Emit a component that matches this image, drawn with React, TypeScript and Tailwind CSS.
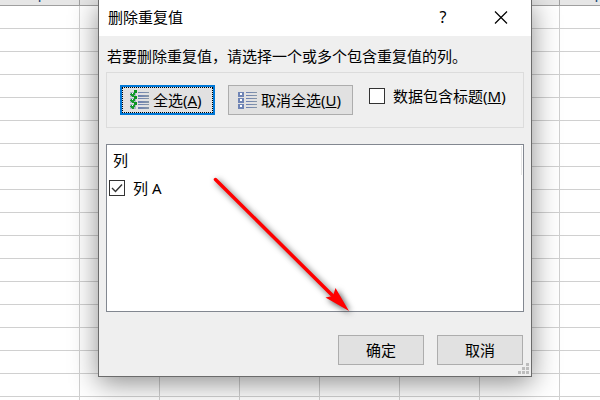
import type { ReactNode } from "react"

const columns = ["I", "J", "K", "L", "M", "N", "O", "P", "Q", "R", "S", "T", "U", "V", "W", "X"]
const rows = Array.from({ length: 40 }, (_, i) => i)

function Sheet() {
  return (
    <table className="table-fixed border-separate border-spacing-0 w-[1280px]">
      <thead>
        <tr>
          {columns.map((name) => (
            <th key={name} className="p-0 bg-[#e6e6e6] border-r border-b border-[#9f9f9f] text-[#1f4e79] font-normal">
              <div className="h-[5px] flex items-end justify-center overflow-hidden text-[15px] leading-[17px] font-['Liberation_Sans',sans-serif]">
                {name}
              </div>
            </th>
          ))}
        </tr>
      </thead>
      <tbody>
        {rows.map((row) => (
          <tr key={row}>
            {columns.map((name) => (
              <td key={name} className="h-[23px] p-0 border-r border-b border-[#d0d0d0]" />
            ))}
          </tr>
        ))}
      </tbody>
    </table>
  )
}

function ListIcon({ checked = false }: { checked?: boolean }) {
  return (
    <svg width="20" height="20" viewBox="0 0 20 20" shapeRendering="crispEdges" aria-hidden="true">
      <defs>
        <linearGradient id="fade">
          <stop offset="0" stopColor="#6a7fb3" />
          <stop offset="1" stopColor="#8797a8" />
        </linearGradient>
      </defs>
      {[2, 8, 14].map((y) => (
        <g key={y}>
          <rect x="0" y={y} width="6" height="5" fill={checked ? "#a9b6c9" : "#6f84b5"} />
          <rect x="2" y={y + 1} width="2" height="2" fill="#fff" />
          <rect x="8" y={y} width="11" height="1" fill="url(#fade)" />
          <rect x="8" y={y + 3} width="11" height={checked ? 2 : 1} fill="url(#fade)" />
          {checked && (
            <>
              <path d={`M1 ${y + 2} L3 ${y + 4} L5 ${y}`} fill="none" stroke="#169a2c" strokeWidth="1.5" />
              <rect x="4" y={y - 2} width="3" height="3" fill="#0c9420" />
            </>
          )}
        </g>
      ))}
    </svg>
  )
}

function CheckBox({ id, defaultChecked = false, children }: { id: string; defaultChecked?: boolean; children: ReactNode }) {
  return (
    <div className="flex items-center gap-2">
      <span className="grid size-4">
        <input
          id={id}
          type="checkbox"
          defaultChecked={defaultChecked}
          className="peer [grid-area:1/1] size-4 appearance-none border border-[#333] bg-white"
        />
        <svg viewBox="0 0 16 16" className="[grid-area:1/1] size-4 pointer-events-none invisible peer-checked:visible">
          <path d="M3 8 L6.5 11.5 L13 4.5" fill="none" stroke="#333" strokeWidth="1.4" />
        </svg>
      </span>
      <label htmlFor={id}>{children}</label>
    </div>
  )
}

function Grip() {
  const dots = [[8, 0], [4, 4], [8, 4], [0, 8], [4, 8], [8, 8]]
  return (
    <svg width="11" height="11" viewBox="0 0 11 11" className="absolute right-[2px] bottom-[2px]" aria-hidden="true">
      {dots.map(([x, y]) => (
        <rect key={`${x}-${y}`} x={x} y={y} width="3" height="3" fill="#bdbdbd" />
      ))}
    </svg>
  )
}

function Arrow() {
  return (
    <svg
      width="150"
      height="150"
      viewBox="0 0 150 150"
      className="absolute left-[210px] top-[174px] overflow-visible pointer-events-none drop-shadow-[2px_2px_3px_rgba(0,0,0,0.7)]"
      aria-hidden="true"
    >
      <path d="M5.5 5.5 L126 125" stroke="#f00" strokeWidth="3.5" strokeLinecap="round" />
      <path d="M139 137 L115.5 123.5 L123 122 L125.5 114 Z" fill="#f00" />
    </svg>
  )
}

export default function App() {
  return (
    <main className="relative h-screen overflow-hidden bg-white text-black text-[15px] leading-5 font-['Noto_Sans','Noto_Sans_CJK_SC',sans-serif]">
      <Sheet />
      <section
        role="dialog"
        aria-labelledby="title"
        className="absolute left-[98px] top-0 w-[434px] border border-t-0 border-[#6b6b6b] bg-[#efefef] shadow-[0_6px_26px_rgba(0,0,0,0.45)]"
      >
        <header className="flex h-9 items-center bg-white pb-0.5 pl-[9px] pr-5">
          <h1 id="title" className="flex-1">删除重复值</h1>
          <button type="button" className="w-6 text-base">?</button>
          <button type="button" aria-label="关闭" className="ml-9">
            <svg width="20" height="20" viewBox="0 0 20 20">
              <path d="M4 4.5 L16 16.5 M16 4.5 L4 16.5" stroke="#000" strokeWidth="1.2" />
            </svg>
          </button>
        </header>

        <div className="px-[7px] pt-[10px] pb-[11px]">
          <p className="px-px">若要删除重复值，请选择一个或多个包含重复值的列。</p>

          <div className="mt-1.5 flex h-14 items-start gap-[13px] border border-[#dcdcdc] px-[13px] pt-3">
            <button type="button" className="h-[30px] w-[95px] border-2 border-[#0078d7] bg-[#e1e1e1]">
              <span className="flex h-full items-center gap-[3px] border border-dotted border-black px-[7px]">
                <ListIcon checked />
                <span>全选(<u>A</u>)</span>
              </span>
            </button>
            <button type="button" className="flex h-[30px] w-[125px] items-center gap-[3px] border border-[#adadad] bg-[#e1e1e1] px-[9px]">
              <ListIcon />
              <span>取消全选(<u>U</u>)</span>
            </button>
            <div className="ml-[3px] flex h-[22px] items-center">
              <CheckBox id="has-header">数据包含标题(<u>M</u>)</CheckBox>
            </div>
          </div>

          <div className="mt-4 h-[168px] border border-[#828790] bg-white p-px">
            <div className="flex h-[29px] items-center border-r border-[#e5e5e5] pb-0.5 pl-[5px]">列</div>
            <div className="mt-[3px] pl-px">
              <CheckBox id="column-a" defaultChecked>列 A</CheckBox>
            </div>
          </div>

          <footer className="mt-[23px] flex justify-end gap-[13px] pr-px">
            <button type="button" className="h-[30px] w-[86px] border border-[#adadad] bg-[#e1e1e1]">确定</button>
            <button type="button" className="h-[30px] w-[86px] border border-[#adadad] bg-[#e1e1e1]">取消</button>
          </footer>
        </div>
        <Grip />
      </section>
      <Arrow />
    </main>
  )
}
